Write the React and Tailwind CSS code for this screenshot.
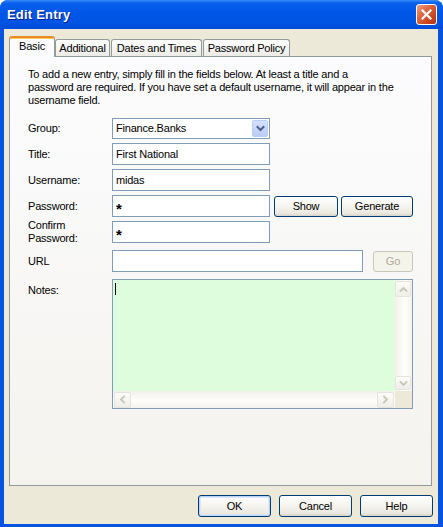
import React from "react";

const btn =
  "flex items-center justify-center rounded-[3px] border border-[#003C74] bg-[linear-gradient(to_bottom,#FFFFFF_0%,#F6F5F0_45%,#EBE9E0_85%,#D8D3C6_100%)] text-[11px] tracking-[-0.2px] text-black";

function Chevron({ dir = "down", color = "#4D6185", size = 9, sw = 2 }) {
  const paths = {
    down: "M1.5 3 L4.5 6 L7.5 3",
    up: "M1.5 6 L4.5 3 L7.5 6",
    left: "M6 1.5 L3 4.5 L6 7.5",
    right: "M3 1.5 L6 4.5 L3 7.5",
  };
  return (
    <svg width={size} height={size} viewBox="0 0 9 9">
      <path d={paths[dir]} fill="none" stroke={color} strokeWidth={sw} strokeLinecap="square" />
    </svg>
  );
}

function ScrollBtn({ dir, className = "" }) {
  return (
    <div
      className={
        "flex items-center justify-center rounded-[2px] border border-[#E6E4DC] bg-[linear-gradient(to_bottom,#FCFCFA,#EFEEE8)] " +
        className
      }
    >
      <Chevron dir={dir} color="#C9C6B8" size={9} sw={1.8} />
    </div>
  );
}

function Input({ w, children }) {
  return (
    <div
      className={
        "h-[22px] border border-[#7F9DB9] bg-white flex items-center pl-[3px] text-[11px] tracking-[-0.2px] text-black " +
        w
      }
    >
      {children}
    </div>
  );
}

function Label({ children }) {
  return <div className="w-[84px] shrink-0 text-[11px] tracking-[-0.2px] leading-[13px] text-black">{children}</div>;
}

export default function App() {
  return (
    <div className="w-[443px] h-[527px] bg-white">
      <div className="w-[443px] h-[527px] flex flex-col rounded-t-[8px] overflow-hidden bg-[#0653E0] font-['Liberation_Sans',Arial,sans-serif]">
        {/* Title bar */}
        <div className="h-[29px] shrink-0 flex items-center justify-between pl-[7px] pr-[6px] bg-[linear-gradient(to_bottom,#3A8BF8_0px,#0A60EC_3px,#0058E8_40%,#0053E2_80%,#004BD6_100%)]">
          <span className="text-white font-bold text-[13px] tracking-[0.2px] [text-shadow:1px_1px_0_#0A1E8C]">
            Edit Entry
          </span>
          <div className="w-[21px] h-[21px] rounded-[3px] border border-white flex items-center justify-center bg-[linear-gradient(135deg,#EFA287_0%,#DE6A45_35%,#C9421D_75%,#B83512_100%)]">
            <svg width="11" height="11" viewBox="0 0 11 11">
              <path d="M1.5 1.5 L9.5 9.5 M9.5 1.5 L1.5 9.5" stroke="white" strokeWidth="2.2" strokeLinecap="square" />
            </svg>
          </div>
        </div>

        {/* Body */}
        <div className="flex-1 ml-[4px] mr-[5px] mb-[3px] bg-[#ECE9D8] flex flex-col pt-[7px] pl-[5px] pr-[6px]">
          {/* Tabs */}
          <div className="h-[20px] flex items-end">
            <div className="relative z-10 w-[46px] h-[21px] -mb-px rounded-t-[3px] border-x border-[#919B9C] border-t-[2px] border-t-[#E68B2C] shadow-[inset_0_1px_0_#FFCA5A] bg-[#FCFCFE] flex items-center justify-center text-[11px] tracking-[-0.2px] pb-[2px]">
              Basic
            </div>
            <div className="w-[55px] h-[17px] rounded-t-[3px] border-x border-t border-[#919B9C] bg-[linear-gradient(to_bottom,#FFFFFF,#ECEBE6)] flex items-center justify-center text-[11px] tracking-[-0.2px]">
              Additional
            </div>
            <div className="ml-[1px] w-[91px] h-[17px] rounded-t-[3px] border-x border-t border-[#919B9C] bg-[linear-gradient(to_bottom,#FFFFFF,#ECEBE6)] flex items-center justify-center text-[11px] tracking-[-0.2px]">
              Dates and Times
            </div>
            <div className="ml-[1px] w-[87px] h-[17px] rounded-t-[3px] border-x border-t border-[#919B9C] bg-[linear-gradient(to_bottom,#FFFFFF,#ECEBE6)] flex items-center justify-center text-[11px] tracking-[-0.2px]">
              Password Policy
            </div>
          </div>

          {/* Panel */}
          <div className="h-[430px] border border-[#919B9C] bg-[linear-gradient(to_bottom,#FCFCFE,#F4F3EE)] flex flex-col pl-[18px]">
            <div className="mt-[11px] text-[11px] tracking-[-0.2px] leading-[13px] text-black whitespace-nowrap">
              To add a new entry, simply fill in the fields below. At least a title and a
              <br />
              password are required. If you have set a default username, it will appear in the
              <br />
              username field.
            </div>

            {/* Group */}
            <div className="mt-[11px] h-[21px] flex items-center">
              <Label>Group:</Label>
              <div className="w-[158px] h-[21px] border border-[#7F9DB9] bg-white flex items-center justify-between pl-[3px] pr-px text-[11px] tracking-[-0.2px]">
                <span>Finance.Banks</span>
                <div className="w-[16px] h-[17px] rounded-[2px] border border-[#B9CCF5] bg-[linear-gradient(to_bottom,#D5E1FD,#BACCF6)] flex items-center justify-center">
                  <Chevron dir="down" color="#4D6185" size={9} sw={2} />
                </div>
              </div>
            </div>

            <div className="mt-[4px] h-[22px] flex items-center">
              <Label>Title:</Label>
              <Input w="w-[158px]">First National</Input>
            </div>

            <div className="mt-[4px] h-[22px] flex items-center">
              <Label>Username:</Label>
              <Input w="w-[158px]">midas</Input>
            </div>

            <div className="mt-[4px] h-[22px] flex items-center">
              <Label>Password:</Label>
              <Input w="w-[158px]">
                <span className="font-bold text-[15px] leading-none mt-[5px]">*</span>
              </Input>
              <div className={btn + " ml-[4px] w-[64px] h-[21px]"}>Show</div>
              <div className={btn + " ml-[3px] w-[72px] h-[21px]"}>Generate</div>
            </div>

            <div className="mt-[4px] h-[22px] flex items-center">
              <Label>
                Confirm
                <br />
                Password:
              </Label>
              <Input w="w-[158px]">
                <span className="font-bold text-[15px] leading-none mt-[5px]">*</span>
              </Input>
            </div>

            <div className="mt-[7px] h-[22px] flex items-center">
              <Label>URL</Label>
              <Input w="w-[251px]" />
              <div className="ml-[10px] w-[40px] h-[21px] rounded-[3px] border border-[#C9C7BA] bg-[#F5F4EA] flex items-center justify-center text-[11px] text-[#ACA899]">
                Go
              </div>
            </div>

            <div className="mt-[7px] flex items-start">
              <div className="w-[84px] shrink-0 pt-[5px] text-[11px] tracking-[-0.2px] leading-[13px]">Notes:</div>
              <div className="w-[301px] h-[130px] border border-[#7F9DB9] flex flex-col bg-white">
                <div className="flex-1 flex">
                  <div className="flex-1 bg-[#DDFDDC] pl-[2px] pt-[3px]">
                    <div className="w-px h-[12px] bg-black" />
                  </div>
                  <div className="w-[17px] flex flex-col justify-between py-px bg-[linear-gradient(to_right,#F3F1EC,#FEFEFB_60%,#F4F3EE)]">
                    <ScrollBtn dir="up" className="w-[16px] h-[16px]" />
                    <ScrollBtn dir="down" className="w-[16px] h-[14px]" />
                  </div>
                </div>
                <div className="h-[17px] flex">
                  <div className="flex-1 flex justify-between items-center px-px bg-[linear-gradient(to_bottom,#F3F1EC,#FEFEFB_60%,#F4F3EE)]">
                    <ScrollBtn dir="left" className="w-[17px] h-[16px]" />
                    <ScrollBtn dir="right" className="w-[17px] h-[16px]" />
                  </div>
                  <div className="w-[17px] bg-[#ECE9D8]" />
                </div>
              </div>
            </div>
          </div>

          {/* Bottom buttons */}
          <div className="mt-[9px] flex justify-end gap-[8px] -mr-[1px]">
            <div className={btn + " w-[73px] h-[22px] shadow-[inset_0_0_0_1px_#BCD2F6,inset_0_0_0_2px_#DCE7FB]"}>OK</div>
            <div className={btn + " w-[73px] h-[22px]"}>Cancel</div>
            <div className={btn + " w-[73px] h-[22px]"}>Help</div>
          </div>
        </div>
      </div>
    </div>
  );
}
